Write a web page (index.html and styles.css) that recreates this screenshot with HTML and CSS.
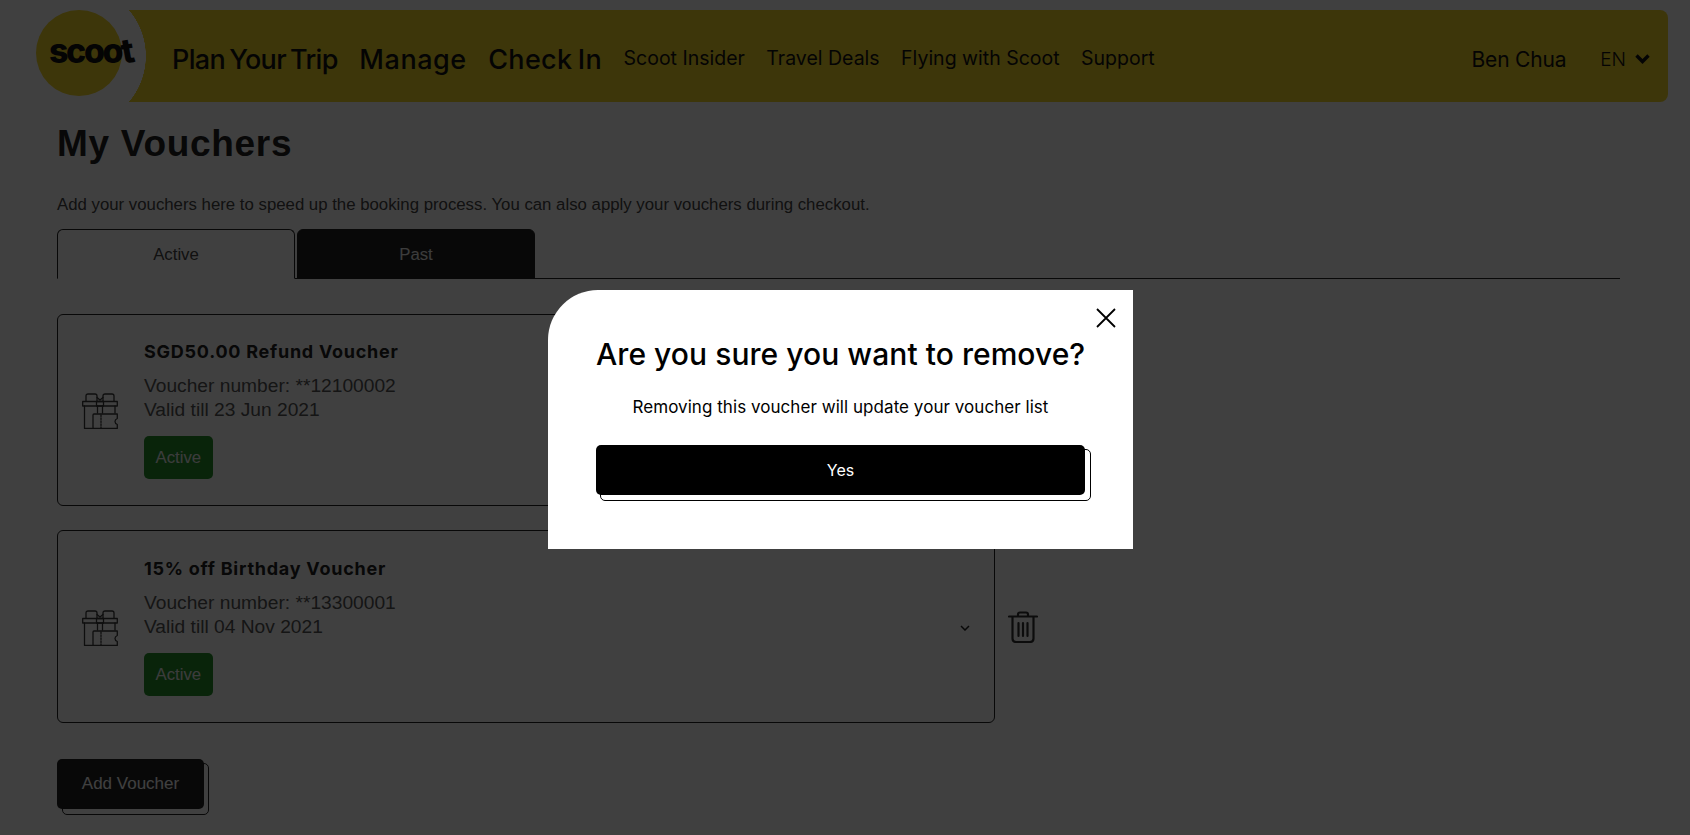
FILE: index.html
```html
<!DOCTYPE html>
<html lang="en">
<head>
<meta charset="utf-8">
<title>My Vouchers</title>
<link rel="stylesheet" href="styles.css">
</head>
<body>
<header class="topbar">
  <a class="logo"><span class="logo-text">sco<span class="logo-o">o</span><span class="logo-t">t</span></span></a>
  <nav class="nav">
    <a class="nav-main nav-plan">Plan Your Trip</a>
    <a class="nav-main nav-manage">Manage</a>
    <a class="nav-main nav-check">Check In</a>
    <a class="nav-sub">Scoot Insider</a>
    <a class="nav-sub">Travel Deals</a>
    <a class="nav-sub">Flying with Scoot</a>
    <a class="nav-sub">Support</a>
  </nav>
  <div class="account">
    <span class="user">Ben Chua</span>
    <span class="lang">EN
      <svg class="lang-chev" viewBox="0 0 15 10" width="15" height="10"><path d="M1.500 1.500l6 6 6-6" fill="none" stroke="#111" stroke-width="3.4"/></svg>
    </span>
  </div>
</header>

<main class="page">
  <h1 class="title">My Vouchers</h1>
  <p class="intro">Add your vouchers here to speed up the booking process. You can also apply your vouchers during checkout.</p>
  <div class="tabs">
    <button class="tab tab-active">Active</button>
    <button class="tab tab-past">Past</button>
  </div>

  <div class="row">
    <article class="card">
      <svg class="gift" viewBox="0 0 36 36" width="36" height="36"><use href="#gift-icon"/></svg>
      <div class="info">
        <h2 class="name">SGD50.00 Refund Voucher</h2>
        <p class="meta">Voucher number: **12100002<br>Valid till 23 Jun 2021</p>
        <span class="badge">Active</span>
      </div>
      <svg class="chev" viewBox="0 0 10 6" width="10" height="6"><path d="M1 1l4 4 4-4" fill="none" stroke="#222" stroke-width="1.5"/></svg>
    </article>
    <svg class="trash" viewBox="0 0 30 32" width="30" height="32"><use href="#trash-icon"/></svg>
  </div>

  <div class="row">
    <article class="card">
      <svg class="gift" viewBox="0 0 36 36" width="36" height="36"><use href="#gift-icon"/></svg>
      <div class="info">
        <h2 class="name">15% off Birthday Voucher</h2>
        <p class="meta">Voucher number: **13300001<br>Valid till 04 Nov 2021</p>
        <span class="badge">Active</span>
      </div>
      <svg class="chev" viewBox="0 0 10 6" width="10" height="6"><path d="M1 1l4 4 4-4" fill="none" stroke="#222" stroke-width="1.5"/></svg>
    </article>
    <svg class="trash" viewBox="0 0 30 32" width="30" height="32"><use href="#trash-icon"/></svg>
  </div>

  <button class="btn btn-add">Add Voucher</button>
</main>

<svg class="defs" width="0" height="0" aria-hidden="true">
  <symbol id="gift-icon" viewBox="0 0 36 36">
    <g fill="none" stroke="#3a3a3a" stroke-width="1.3" stroke-linejoin="round" stroke-linecap="round">
      <path d="M2.500 13V35.500H11"/>
      <path d="M.7 8.500H35.300V13H.7z"/>
      <path d="M4 8V3Q4 1 6 1H13Q15 1 15 3V8"/>
      <path d="M21 8V3Q21 1 23 1H30Q32 1 32 3V8"/>
      <path d="M15 4.500L18 7L21 4.500"/>
      <path d="M14.500 8.500H21.500V13H14.500z"/>
      <path d="M15.500 13V20M20.500 13V20M33 13V20"/>
      <path d="M11 22Q11 21 12 21H35.300V25.500Q33 26.500 33 28.500Q33 30.500 35.300 31.500V35.500H12Q11 35.500 11 34.500z"/>
      <path d="M19 22V35" stroke-dasharray="1.500 1.500"/>
    </g>
  </symbol>
  <symbol id="trash-icon" viewBox="0 0 30 32">
    <g fill="none" stroke="#333" stroke-width="2.2" stroke-linecap="round" stroke-linejoin="round">
      <path d="M1 5.500H29"/>
      <path d="M10 5V3.500Q10 1.500 12 1.500H18Q20 1.500 20 3.500V5"/>
      <path d="M4.500 6V27.500Q4.500 31 8 31H22Q25.500 31 25.500 27.500V6"/>
      <path d="M10.500 12V25M15 12V25M19.500 12V25"/>
    </g>
  </symbol>
</svg>

<div class="overlay"></div>

<section class="modal">
  <svg class="close" viewBox="0 0 20 20" width="20" height="20"><path d="M1 1l18 18M19 1L1 19" stroke="#000" stroke-width="1.800" fill="none"/></svg>
  <h2 class="modal-title">Are you sure you want to remove?</h2>
  <p class="modal-text">Removing this voucher will update your voucher list</p>
  <button class="btn btn-yes">Yes</button>
</section>
</body>
</html>
```

FILE: styles.css
```css
* { box-sizing: border-box; }
html, body { height: 100%; }
body {
  margin: 0;
  background: #fff;
  color: #333;
  font-family: "Liberation Sans", Arial, sans-serif;
  overflow: hidden;
  position: relative;
}

.topbar {
  display: flex;
  align-items: center;
  height: 92px;
  margin: 10px 22px 0 36px;
  padding-right: 18px;
  border-radius: 0 8px 8px 0;
  background: radial-gradient(circle 71px at 39px 46px, #fff 99.5%, #f2d52a 100%);
  color: #111;
}
.logo {
  flex: none;
  width: 86px;
  height: 86px;
  margin-right: 50px;
  margin-top: -6px;
  border-radius: 50%;
  background: #f2d52a;
  display: flex;
  align-items: center;
  white-space: nowrap;
}
.logo-text {
  margin: -4px 0 0 13px;
  font: 800 34px/1 Inter, sans-serif;
  letter-spacing: -2.4px;
  color: #111;
  position: relative;
}
.logo-t { display: inline-block; transform: rotate(-10deg); }
.nav { display: flex; align-items: center; gap: 21.5px; flex: 1; padding-top: 6px; }
.nav-main { font: 500 27px/1 Inter, sans-serif; }
.nav-plan { letter-spacing: -.65px; word-spacing: -2.5px; }
.nav-manage { letter-spacing: .55px; }
.nav-check { letter-spacing: .3px; word-spacing: -2px; }
.nav-sub { font: 400 19.5px/1 Inter, sans-serif; }
.account { display: flex; align-items: center; gap: 34px; padding-top: 6px; }
.user { font: 400 21px/1 Inter, sans-serif; letter-spacing: -.2px; }
.lang { display: flex; align-items: center; gap: 9px; font: 300 19px/1 Inter, sans-serif; }
.lang-chev { display: block; }

.page { padding: 0 70px 0 57px; }
.title {
  margin: 21px 0 0;
  font-size: 37px;
  line-height: 42px;
  font-weight: 700;
  letter-spacing: .7px;
  color: #222;
}
.intro { margin: 30px 0 0; font-size: 16.8px; line-height: 20px; color: #444; }
.tabs {
  display: flex;
  gap: 2px;
  margin-top: 14px;
  border-bottom: 1px solid #222;
  height: 50px;
}
.tab {
  width: 238px;
  height: 50px;
  padding-top: 3px;
  border: 1px solid #222;
  border-radius: 6px 6px 0 0;
  font: 400 16.8px "Liberation Sans", Arial, sans-serif;
  cursor: pointer;
}
.tab-active { background: #fff; color: #444; border-bottom-color: #fff; }
.tab-past { background: #222; color: #eee; }

.row { display: flex; align-items: center; gap: 13px; margin-top: 24px; }
.tabs + .row { margin-top: 35px; }
.card {
  position: relative;
  display: flex;
  align-items: center;
  width: 938px;
  height: 192px;
  padding-left: 24px;
  border: 1px solid #222;
  border-radius: 6px;
}
.row + .row .card { height: 193px; }
.gift { flex: none; margin-right: 26px; margin-top: 2px; }
.info { flex: 1; }
.name {
  margin: 0;
  font: 700 18px/22px Inter, sans-serif;
  letter-spacing: .75px;
  color: #222;
}
.meta { margin: 11px 0 0; font-size: 19.2px; line-height: 24px; color: #555; }
.badge {
  display: inline-block;
  margin-top: 14px;
  padding: 0 11.5px;
  height: 43px;
  line-height: 43px;
  font-size: 16.8px;
  color: #eee;
  background: #258f2a;
  border-radius: 5px;
}
.chev { flex: none; margin: 2px 24px 0 0; }
.trash { flex: none; }

.btn {
  position: relative;
  display: block;
  height: 50px;
  border: 0;
  border-radius: 5px;
  background: #222;
  color: #fff;
  font: 400 17px "Liberation Sans", Arial, sans-serif;
  cursor: pointer;
}
.btn::after {
  content: "";
  position: absolute;
  inset: 4px -6px -6px 4px;
  border: 1px solid #222;
  border-radius: 5px;
}
.btn-add { width: 147px; margin-top: 36px; }
.btn-add::after { inset: 4px -5px -6px 5px; }

.overlay {
  position: absolute;
  inset: 0;
  background: rgba(0, 0, 0, .75);
}
.modal {
  position: absolute;
  left: 548px;
  top: 290px;
  width: 585px;
  height: 259px;
  padding: 45px 48px 0;
  background: #fff;
  border-top-left-radius: 50px;
  color: #000;
  text-align: center;
}
.close { position: absolute; left: 548px; top: 18px; }
.modal-title { margin: 0; font: 500 30px/38px Inter, sans-serif; white-space: nowrap; letter-spacing: .05px; }
.modal-text { margin: 22px 0 0; font: 400 17px/24px Inter, sans-serif; letter-spacing: .05px; }
.btn-yes {
  width: 489px;
  margin-top: 26px;
  background: #000;
  font: 400 16px Inter, sans-serif;
}
.btn-yes::after { border-color: #000; }
.defs { position: absolute; }
```
